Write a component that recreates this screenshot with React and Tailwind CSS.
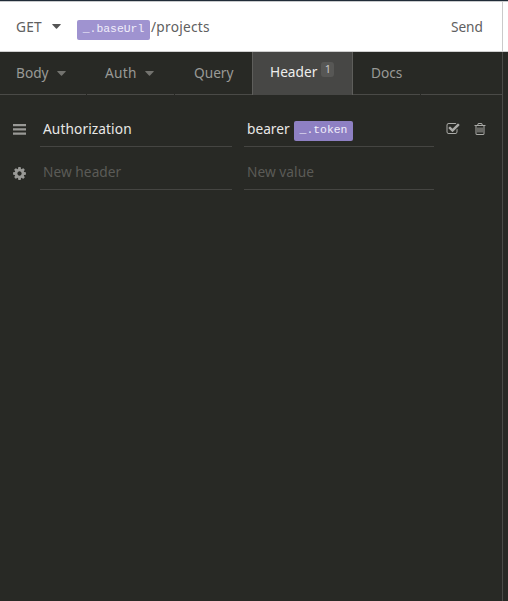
const paths = {
  cog: "M1152 896q0-106-75-181t-181-75-181 75-75 181 75 181 181 75 181-75 75-181zm512-109v222q0 12-8 23t-20 13l-185 28q-19 54-39 91 35 50 107 138 10 12 10 25t-9 23q-27 37-99 108t-94 71q-12 0-26-9l-138-108q-44 23-91 38-16 136-29 186-7 28-36 28h-222q-14 0-24.5-8.5t-11.5-21.5l-28-184q-49-16-90-37l-141 107q-10 9-25 9-14 0-25-11-126-114-165-168-7-10-7-23 0-12 8-23 15-21 51-66.5t54-70.5q-27-50-41-99l-183-27q-13-2-21-12.5t-8-23.5v-222q0-12 8-23t19-13l186-28q14-46 39-92-40-57-107-138-10-12-10-24 0-10 9-23 26-36 98.5-107.5t94.5-71.5q13 0 26 10l138 107q44-23 91-38 16-136 29-186 7-28 36-28h222q14 0 24.5 8.5t11.5 21.5l28 184q49 16 90 37l142-107q9-9 24-9 13 0 25 10 129 119 165 170 7 8 7 22 0 12-8 23-15 21-51 66.5t-54 70.5q26 50 41 98l183 28q13 2 21 12.5t8 23.5z",
  check: "M1472 930v318q0 119-84.5 203.5t-203.5 84.5h-832q-119 0-203.5-84.5t-84.5-203.5v-832q0-119 84.5-203.5t203.5-84.5h832q63 0 117 25 15 7 18 23 3 17-9 29l-49 49q-10 10-23 10-3 0-9-2-23-6-45-6h-832q-66 0-113 47t-47 113v832q0 66 47 113t113 47h832q66 0 113-47t47-113v-254q0-13 9-22l64-64q10-10 23-10 6 0 12 3 20 8 20 29zm231-489l-814 814q-24 24-57 24t-57-24l-430-430q-24-24-24-57t24-57l110-110q24-24 57-24t57 24l263 263 647-647q24-24 57-24t57 24l110 110q24 24 24 57t-24 57z",
  trash: "M704 736v576q0 14-9 23t-23 9h-64q-14 0-23-9t-9-23v-576q0-14 9-23t23-9h64q14 0 23 9t9 23zm256 0v576q0 14-9 23t-23 9h-64q-14 0-23-9t-9-23v-576q0-14 9-23t23-9h64q14 0 23 9t9 23zm256 0v576q0 14-9 23t-23 9h-64q-14 0-23-9t-9-23v-576q0-14 9-23t23-9h64q14 0 23 9t9 23zm128 724v-948h-896v948q0 22 7 40.5t14.5 27 10.5 8.5h832q3 0 10.5-8.5t14.5-27 7-40.5zm-672-1076h448l-48-117q-7-9-17-11h-317q-10 2-17 11zm928 32v64q0 14-9 23t-23 9h-96v948q0 83-47 143.5t-113 60.5h-832q-66 0-113-58.5t-47-141.5v-952h-96q-14 0-23-9t-9-23v-64q0-14 9-23t23-9h309l70-167q15-37 54-63t79-26h320q40 0 79 26t54 63l70 167h309q14 0 23 9t9 23z",
};

function Icon({ name, className }) {
  return (
    <svg viewBox="0 0 1792 1792" fill="currentColor" className={`shrink-0 ${className}`}>
      <path d={paths[name]} />
    </svg>
  );
}

function Bars() {
  return (
    <svg viewBox="0 0 13 11" fill="currentColor" className="h-[11px] w-[13px] shrink-0">
      <path d="M0 0h13v2.2H0zM0 4.2h13v2.2H0zM0 8.6h13v2.2H0z" />
    </svg>
  );
}

function Caret({ className }) {
  return (
    <svg viewBox="0 0 9 5" fill="currentColor" className={`h-[5px] w-[9px] shrink-0 ${className}`}>
      <path d="M.7 0h7.6q.8.2.3.8L5 4.6q-.5.4-1 0L.4.8Q-.1.2.7 0z" />
    </svg>
  );
}

function Tag({ children, className }) {
  return (
    <span className={`flex h-5 shrink-0 items-center justify-center rounded-[2px] font-['Liberation_Mono',monospace] text-[11.4px] ${className}`}>
      {children}
    </span>
  );
}

function Tab({ label, caret, className }) {
  return (
    <div className={`flex h-[43px] items-center border-b border-[#4a4a47] text-[#999996] ${className}`}>
      <span>{label}</span>
      {caret && <Caret className="ml-2 text-[#73736f]" />}
    </div>
  );
}

function Field({ children, className }) {
  return (
    <div className={`flex h-[35px] items-center border-b border-[#454542] pl-[3px] pt-px ${className}`}>
      {children}
    </div>
  );
}

export default function App() {
  return (
    <div className="flex h-[601px] w-[508px] flex-col overflow-hidden border-t border-[#202b37] bg-[#282925] font-['Noto_Sans',sans-serif] text-[13.7px] whitespace-nowrap">
      <div className="flex min-h-0 flex-1">
        <div className="flex w-[502px] shrink-0 flex-col">
          <header className="flex h-[51px] shrink-0 items-center border-y border-t-[#c8cacc] border-b-[#cfcfcf] bg-white pl-4 text-[#606060]">
            <span className="w-[36px] pt-px tracking-[0.2px]">GET</span>
            <Caret className="mr-4 text-[#555]" />
            <Tag className="mt-[6px] w-[73px] bg-[#9f93d0] pt-px text-[#f0edfa]">_.baseUrl</Tag>
            <span className="ml-px pt-px tracking-[0.25px]">/projects</span>
            <span className="mr-[19px] ml-auto pt-px">Send</span>
          </header>
          <nav className="flex h-[43px] shrink-0">
            <Tab label="Body" caret className="mr-px w-[86px] pl-4" />
            <Tab label="Auth" caret className="mr-px w-[87px] pl-[18px] tracking-[0.3px]" />
            <Tab label="Query" className="w-[77px] pl-[19px]" />
            <div className="flex w-[101px] items-center border-x border-[#5e5e5b] bg-[#474745] pb-[2px] pl-[17px] text-[#eeeeec]">
              <span>Header</span>
              <span className="mb-[6px] ml-1 flex h-[15px] w-[13px] items-center justify-center rounded-[3px] bg-[#575755] text-[11px] text-[#c8c8c6]">1</span>
            </div>
            <Tab label="Docs" className="mr-px w-[67px] pl-[18px]" />
            <div className="flex-1 border-b border-[#4a4a47]" />
          </nav>
          <main className="flex flex-col pt-[17px]">
            <div className="flex text-[#e8e8e5]">
              <div className="flex w-10 items-center pl-[13px] text-[#999996]"><Bars /></div>
              <Field className="w-[192px] tracking-[0.1px]">Authorization</Field>
              <Field className="ml-3 w-[190px]">
                <span className="w-[47px]">bearer</span>
                <Tag className="mt-[3px] w-[59px] bg-[#8e80c3] text-[#f0edfa]">_.token</Tag>
              </Field>
              <div className="ml-3 flex items-center gap-[13px] pb-px text-[#aaaaa7]">
                <Icon name="check" className="h-[14px] w-[14px]" />
                <Icon name="trash" className="h-[14px] w-[14px]" />
              </div>
            </div>
            <div className="mt-2 flex text-[#5b5b57]">
              <div className="flex w-10 items-center pl-3 pt-px text-[#999996]"><Icon name="cog" className="h-[15px] w-[15px]" /></div>
              <Field className="w-[192px] tracking-[0.05px]">New header</Field>
              <Field className="ml-3 w-[190px] tracking-[0.05px]">New value</Field>
            </div>
          </main>
        </div>
        <div className="flex flex-1 flex-col">
          <div className="h-[51px] shrink-0 border-y border-l border-t-[#c8cacc] border-b-[#cfcfcf] border-l-[#cacaca] bg-white" />
          <div className="flex-1 border-l border-[#4a4a47]" />
        </div>
      </div>
    </div>
  );
}
